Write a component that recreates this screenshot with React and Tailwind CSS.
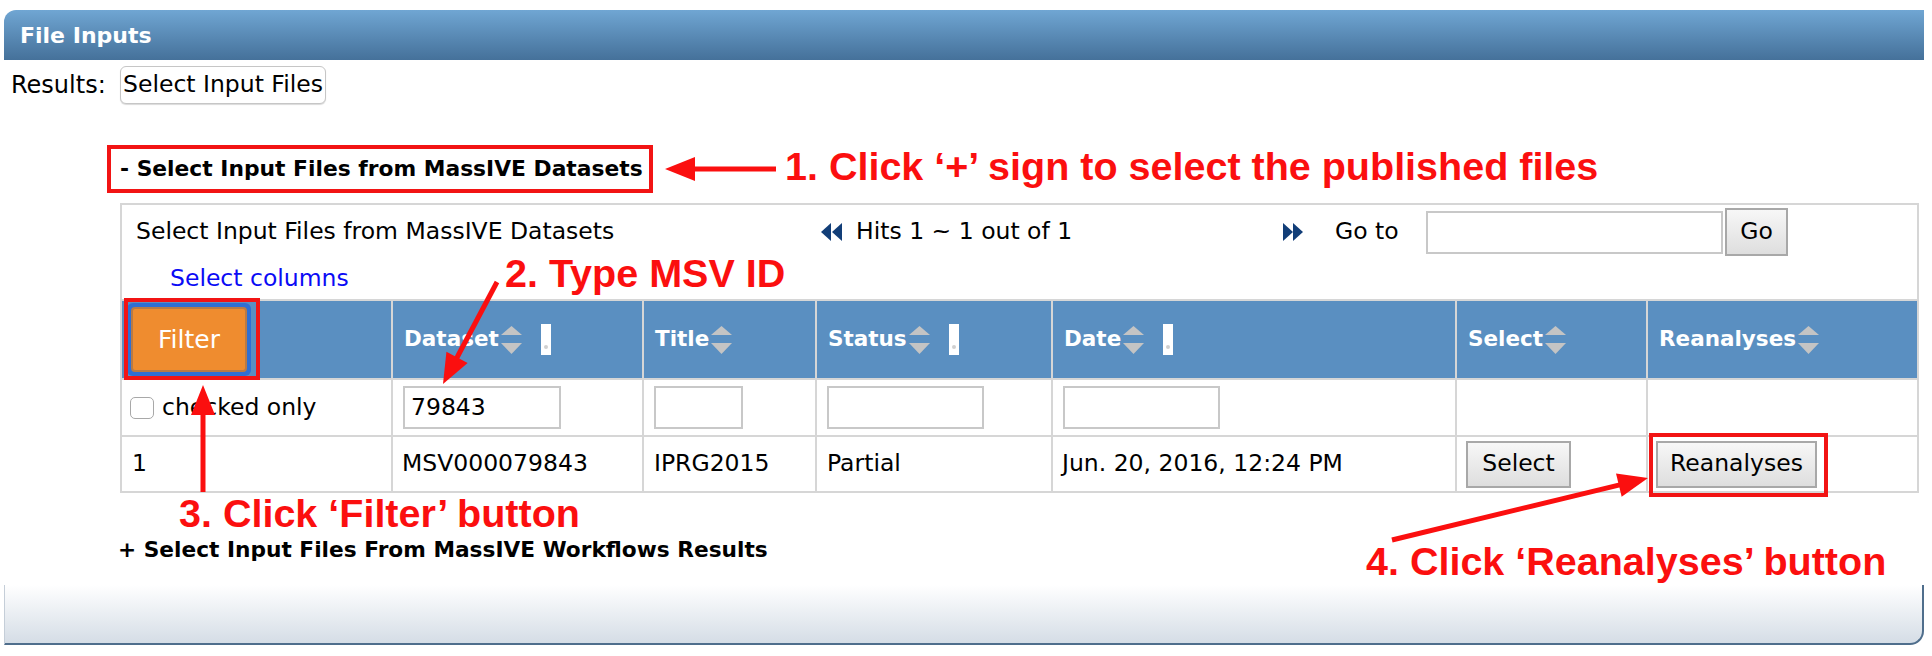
import React from "react";

const ANN = "font-['Liberation_Sans',Arial,sans-serif] font-bold text-[39.5px] leading-none text-[#fb0f0f] whitespace-nowrap";

function Arrow({ x1, y1, x2, y2, len = 30, half = 12, w = 5 }) {
  const dx = x2 - x1;
  const dy = y2 - y1;
  const d = Math.hypot(dx, dy);
  const ux = dx / d;
  const uy = dy / d;
  const bx = x2 - ux * len;
  const by = y2 - uy * len;
  const px = -uy;
  const py = ux;
  const pts = `${x2},${y2} ${bx + px * half},${by + py * half} ${bx - px * half},${by - py * half}`;
  return (
    <g>
      <line x1={x1} y1={y1} x2={bx + ux * 2} y2={by + uy * 2} stroke="#fb0f0f" strokeWidth={w} />
      <polygon points={pts} fill="#fb0f0f" />
    </g>
  );
}

function SortIcon() {
  return (
    <svg width="21" height="28" viewBox="0 0 21 28" className="shrink-0">
      <path d="M10.5 0 L21 9 L0 9 Z" fill="#c4c4c4" />
      <path d="M0 17 L21 17 L10.5 28 Z" fill="#c4c4c4" />
    </svg>
  );
}

function WhiteBar() {
  return (
    <div className="w-[10px] h-[31px] bg-white flex flex-col justify-end items-center pb-[6px] shrink-0">
      <div className="w-[4px] h-[4px] rounded-full bg-[#d0d0d0]" />
    </div>
  );
}

function HeadCell({ label, bar, border = true, w }) {
  return (
    <div className={`${w} h-full flex items-center pl-[11px] ${border ? "border-l-2 border-[#d6d6d6]" : ""}`}>
      <span className="font-bold text-white text-[21.5px]">{label}</span>
      <span className="ml-[2px] flex items-center">
        <SortIcon />
      </span>
      {bar && <span className="ml-[19px] flex items-center"><WhiteBar /></span>}
    </div>
  );
}

function GrayButton({ children, className = "" }) {
  return (
    <div className={`flex items-center justify-center border-2 border-[#a8a8a8] bg-gradient-to-b from-[#f7f7f7] to-[#dedede] text-black text-[23.5px] ${className}`}>
      {children}
    </div>
  );
}

function DoubleLeft() {
  return (
    <svg width="21" height="18" viewBox="0 0 21 18">
      <path d="M10 0 L10 18 L0 9 Z" fill="#123e78" />
      <path d="M21 0 L21 18 L11 9 Z" fill="#123e78" />
    </svg>
  );
}
function DoubleRight() {
  return (
    <svg width="20" height="18" viewBox="0 0 20 18">
      <path d="M0 0 L0 18 L10 9 Z" fill="#123e78" />
      <path d="M10 0 L10 18 L20 9 Z" fill="#123e78" />
    </svg>
  );
}

const cols = ["w-[269px]", "w-[251px]", "w-[173px]", "w-[236px]", "w-[404px]", "w-[191px]", "w-[271px]"];

export default function App() {
  return (
    <div className="relative w-[1932px] h-[656px] bg-white overflow-hidden font-['DejaVu_Sans',sans-serif] text-black">
      <div className="ml-[4px] mt-[10px] w-[1920px] flex flex-col">
        {/* header bar */}
        <div className="h-[50px] rounded-tl-[12px] bg-gradient-to-b from-[#70a6d3] to-[#45719a] flex items-center pl-[16px]">
          <span className="text-white font-bold text-[22px]">File Inputs</span>
        </div>

        {/* results row */}
        <div className="mt-[6px] flex items-center">
          <div className="w-[116px] pl-[7px] text-[24px]">Results:</div>
          <div className="w-[206px] h-[38px] rounded-[6px] border border-[#c6c6c6] bg-white shadow-[0_1px_1px_rgba(0,0,0,0.15)] flex items-center justify-center text-[23.5px]">
            Select Input Files
          </div>
        </div>

        {/* section toggle */}
        <div className="mt-[41px] ml-[103px] w-[546px] h-[48px] border-4 border-[#f21414] flex items-center pl-[9px]">
          <span className="font-bold text-[21.8px] whitespace-nowrap">- Select Input Files from MassIVE Datasets</span>
        </div>

        {/* table */}
        <div className="mt-[10px] ml-[116px] w-[1799px] border-2 border-[#d6d6d6] flex flex-col">
          <div className="h-[94px] flex flex-col">
            <div className="mt-[3px] flex items-center h-[48px]">
              <div className="w-[699px] pl-[14px] text-[23.5px] whitespace-nowrap">Select Input Files from MassIVE Datasets</div>
              <div className="w-[462px] flex items-center">
                <DoubleLeft />
                <span className="ml-[14px] text-[23.5px] whitespace-nowrap">Hits 1 ~ 1 out of 1</span>
              </div>
              <div className="w-[52px] flex items-center"><DoubleRight /></div>
              <div className="w-[91px] text-[23.5px] whitespace-nowrap">Go to</div>
              <div className="w-[297px] h-[43px] border-2 border-[#c8c8c8] bg-white" />
              <GrayButton className="ml-[2px] w-[63px] h-[48px]">Go</GrayButton>
            </div>
            <div className="mt-[8px] pl-[48px] text-[23.5px] text-[#0b0bf5] leading-[28px]">Select columns</div>
          </div>

          {/* header row */}
          <div className="h-[79px] border-t-2 border-[#d6d6d6] bg-[#5a8fc1] flex">
            <div className={`${cols[0]} h-full flex items-center pl-[5px]`}>
              <div className="rounded-[6px] bg-[#2f6fd3] p-[4px]">
                <div className="w-[116px] h-[65px] rounded-[4px] border-2 border-[#b97a45] bg-[#ef8c2f] flex items-center justify-center text-white text-[25px]">
                  Filter
                </div>
              </div>
            </div>
            <HeadCell w={cols[1]} label="Dataset" bar />
            <HeadCell w={cols[2]} label="Title" />
            <HeadCell w={cols[3]} label="Status" bar />
            <HeadCell w={cols[4]} label="Date" bar />
            <HeadCell w={cols[5]} label="Select" />
            <HeadCell w={cols[6]} label="Reanalyses" />
          </div>

          {/* filter row */}
          <div className="h-[57px] border-t-2 border-[#d6d6d6] flex text-[23.5px]">
            <div className={`${cols[0]} flex items-center pl-[8px]`}>
              <div className="w-[24px] h-[22px] rounded-[5px] border border-[#a8a8a8] bg-white" />
              <span className="ml-[8px] whitespace-nowrap">checked only</span>
            </div>
            <div className={`${cols[1]} flex items-center pl-[10px] border-l-2 border-[#d6d6d6]`}>
              <div className="w-[158px] h-[43px] border-2 border-[#c8c8c8] bg-white flex items-center pl-[6px]">79843</div>
            </div>
            <div className={`${cols[2]} flex items-center pl-[10px] border-l-2 border-[#d6d6d6]`}>
              <div className="w-[89px] h-[43px] border-2 border-[#c8c8c8] bg-white" />
            </div>
            <div className={`${cols[3]} flex items-center pl-[10px] border-l-2 border-[#d6d6d6]`}>
              <div className="w-[157px] h-[43px] border-2 border-[#c8c8c8] bg-white" />
            </div>
            <div className={`${cols[4]} flex items-center pl-[10px] border-l-2 border-[#d6d6d6]`}>
              <div className="w-[157px] h-[43px] border-2 border-[#c8c8c8] bg-white" />
            </div>
            <div className={`${cols[5]} border-l-2 border-[#d6d6d6]`} />
            <div className={`${cols[6]} border-l-2 border-[#d6d6d6]`} />
          </div>

          {/* data row */}
          <div className="h-[56px] border-t-2 border-[#d6d6d6] flex text-[23.5px]">
            <div className={`${cols[0]} flex items-center pl-[10px]`}>1</div>
            <div className={`${cols[1]} flex items-center pl-[9px] border-l-2 border-[#d6d6d6]`}>MSV000079843</div>
            <div className={`${cols[2]} flex items-center pl-[10px] border-l-2 border-[#d6d6d6]`}>IPRG2015</div>
            <div className={`${cols[3]} flex items-center pl-[10px] border-l-2 border-[#d6d6d6]`}>Partial</div>
            <div className={`${cols[4]} flex items-center pl-[9px] border-l-2 border-[#d6d6d6] whitespace-nowrap`}>Jun. 20, 2016, 12:24 PM</div>
            <div className={`${cols[5]} flex items-center pl-[9px] border-l-2 border-[#d6d6d6]`}>
              <GrayButton className="w-[105px] h-[47px]">Select</GrayButton>
            </div>
            <div className={`${cols[6]} flex items-center pl-[8px] border-l-2 border-[#d6d6d6]`}>
              <GrayButton className="w-[161px] h-[47px]">Reanalyses</GrayButton>
            </div>
          </div>
        </div>

        <div className="mt-[43px] pl-[114px] font-bold text-[21.7px] leading-[28px] whitespace-nowrap">
          + Select Input Files From MassIVE Workflows Results
        </div>

        {/* footer */}
        <div className="mt-[21px] h-[60px] rounded-br-[14px] border-r-2 border-b-2 border-l border-r-[#4f6e8c] border-b-[#4f6e8c] border-l-[#c5ced8] bg-gradient-to-b from-white to-[#d5dde6]" />
      </div>

      {/* annotation overlays */}
      <div className="absolute left-[124px] top-[298px] w-[136px] h-[82px] border-4 border-[#f21414]" />
      <div className="absolute left-[1649px] top-[433px] w-[179px] h-[64px] border-4 border-[#f21414]" />

      <svg className="absolute left-0 top-0 pointer-events-none" width="1932" height="656">
        <Arrow x1={776} y1={169} x2={665} y2={169} />
        <Arrow x1={497} y1={282} x2={443} y2={384} />
        <Arrow x1={203} y1={492} x2={203} y2={385} />
        <Arrow x1={1392} y1={540} x2={1648} y2={478} />
      </svg>

      <div className={`absolute left-[785px] top-[147px] ${ANN}`}>1. Click ‘+’ sign to select the published files</div>
      <div className={`absolute left-[505px] top-[254px] ${ANN}`}>2. Type MSV ID</div>
      <div className={`absolute left-[179px] top-[494px] ${ANN}`}>3. Click ‘Filter’ button</div>
      <div className={`absolute left-[1366px] top-[542px] ${ANN}`}>4. Click ‘Reanalyses’ button</div>
    </div>
  );
}
